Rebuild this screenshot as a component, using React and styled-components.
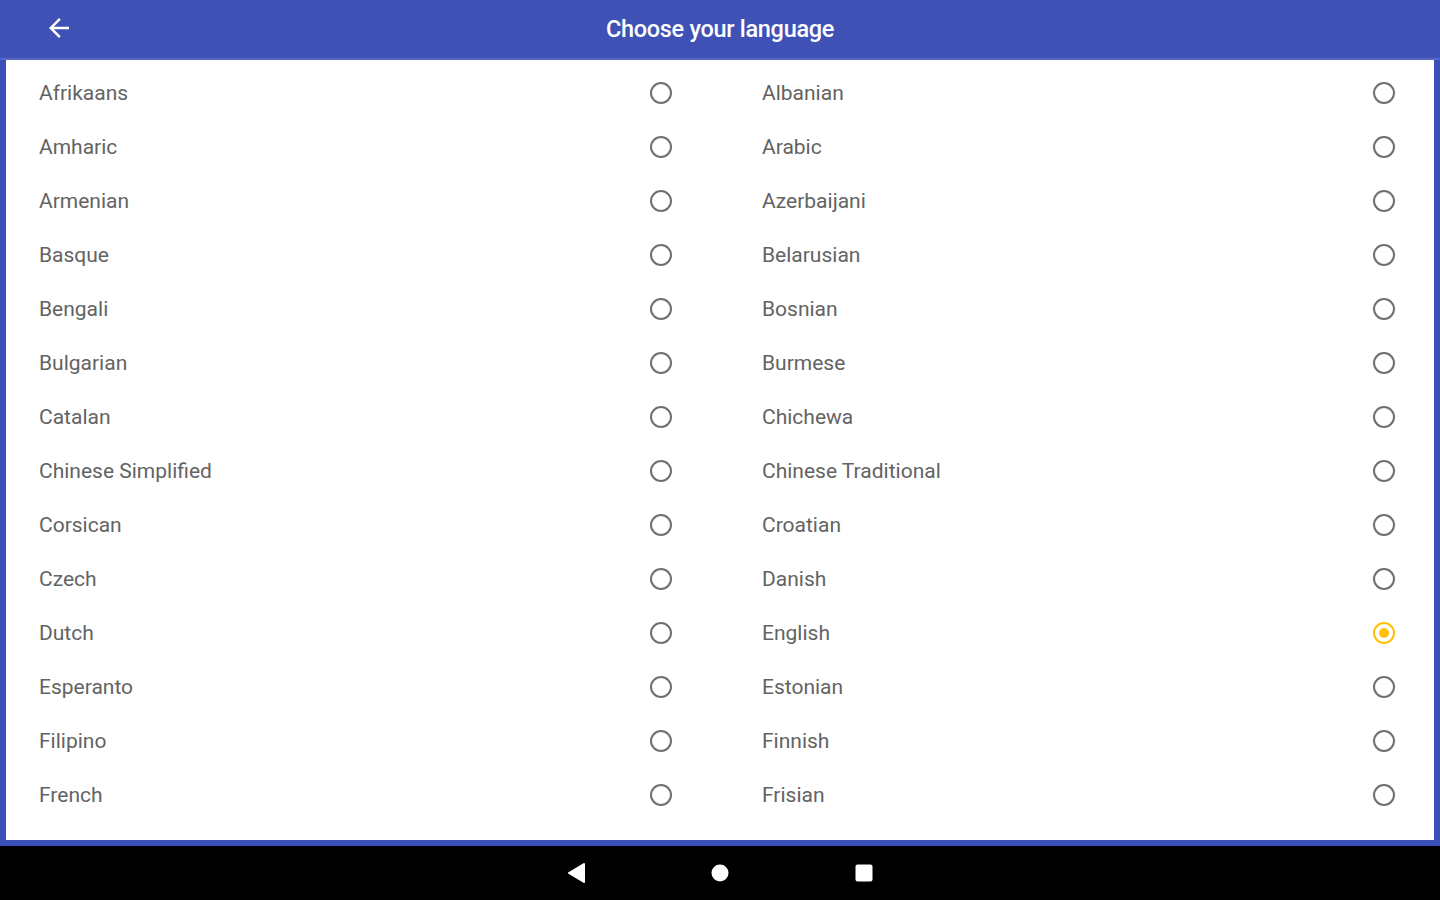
import React from "react";
import styled, {createGlobalStyle} from "styled-components";

const languages = [
    ["Afrikaans", "Albanian"],
    ["Amharic", "Arabic"],
    ["Armenian", "Azerbaijani"],
    ["Basque", "Belarusian"],
    ["Bengali", "Bosnian"],
    ["Bulgarian", "Burmese"],
    ["Catalan", "Chichewa"],
    ["Chinese Simplified", "Chinese Traditional"],
    ["Corsican", "Croatian"],
    ["Czech", "Danish"],
    ["Dutch", "English"],
    ["Esperanto", "Estonian"],
    ["Filipino", "Finnish"],
    ["French", "Frisian"],
];

const App = () => {
    const selected = "English";

    return (
        <Screen>
            <GlobalStyle/>
            <Header>
                <BackButton>
                    <svg width="30" height="30" viewBox="0 0 24 24">
                        <path d="M20 11H7.83l5.59-5.59L12 4l-8 8 8 8 1.41-1.41L7.83 13H20v-2z" fill="#fff"/>
                    </svg>
                </BackButton>
                <Title>Choose your language</Title>
            </Header>
            <Panel>
                <List>
                    {languages.flat().map((name) => (
                        <Row key={name}>
                            <Label>{name}</Label>
                            <Radio checked={name === selected}/>
                        </Row>
                    ))}
                </List>
            </Panel>
            <NavBar>
                <svg width="20" height="22" viewBox="0 0 20 22">
                    <path d="M18 2 L3 11 L18 20 Z" fill="#fff" stroke="#fff" strokeWidth="2" strokeLinejoin="round"/>
                </svg>
                <svg width="20" height="20" viewBox="0 0 20 20">
                    <circle cx="10" cy="10" r="8.5" fill="#fff"/>
                </svg>
                <svg width="20" height="20" viewBox="0 0 20 20">
                    <rect x="1.5" y="1.5" width="17" height="17" rx="2" fill="#fff"/>
                </svg>
            </NavBar>
        </Screen>
    );
};

const GlobalStyle = createGlobalStyle`
  html, body {
    margin: 0;
    padding: 0;
    background: #000;
  }
  body {
    font-family: Roboto, "Liberation Sans", sans-serif;
  }
`;

const Screen = styled.div`
  width: 1440px;
  height: 900px;
  display: flex;
  flex-direction: column;
  background: #3c4fb8;
  overflow: hidden;
`;

const Header = styled.div`
  height: 58px;
  flex: 0 0 58px;
  background: #3f51b5;
  display: flex;
  align-items: center;
  border-bottom: 2px solid #5566c6;
`;

const BackButton = styled.div`
  width: 30px;
  height: 30px;
  margin-left: 44px;
  margin-top: -2px;
  display: flex;
`;

const Title = styled.div`
  flex: 1;
  margin-right: 74px;
  text-align: center;
  color: #fff;
  font-size: 23.5px;
  font-weight: 500;
  letter-spacing: -0.3px;
`;

const Panel = styled.div`
  flex: 0 0 780px;
  margin: 0 6px;
  background: #fff;
  padding: 6px 0 0 33px;
  box-sizing: border-box;
`;

const List = styled.div`
  display: grid;
  grid-template-columns: 723px 1fr;
  grid-auto-rows: 54px;
`;

const Row = styled.div`
  display: flex;
  align-items: center;
`;

const Label = styled.span`
  flex: 0 0 611px;
  font-size: 21px;
  color: #636363;
`;

const Radio = styled.span`
  width: 22px;
  height: 22px;
  box-sizing: border-box;
  border-radius: 50%;
  border: 2px solid ${(p) => (p.checked ? "#ffc107" : "#6f6f6f")};
  display: flex;
  align-items: center;
  justify-content: center;

  &::after {
    content: "";
    width: 10px;
    height: 10px;
    border-radius: 50%;
    background: ${(p) => (p.checked ? "#ffc107" : "transparent")};
  }
`;

const NavBar = styled.div`
  flex: 1;
  margin-top: 6px;
  background: #000;
  display: flex;
  align-items: center;
  justify-content: center;
  gap: 124px;
`;

export default App;
